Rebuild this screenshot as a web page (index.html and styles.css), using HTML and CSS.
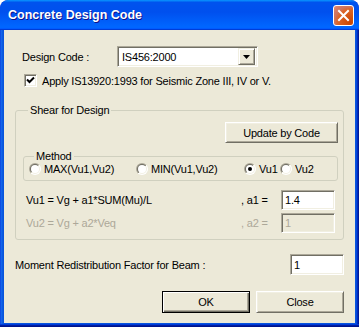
FILE: index.html
```html
<!DOCTYPE html>
<html>
<head>
<meta charset="utf-8">
<link rel="stylesheet" href="styles.css">
</head>
<body>
<div class="window">
  <div class="titlebar">
    <span class="title">Concrete Design Code</span>
    <span class="close-btn">
      <svg width="21" height="21" viewBox="0 0 21 21"><path d="M6 6 L15 15 M15 6 L6 15" stroke="#fff" stroke-width="2" stroke-linecap="square"/></svg>
    </span>
  </div>
  <div class="frame">
    <div class="client">
      <div class="code-row">
        <span class="code-label">Design Code :</span>
        <div class="combo sunken">
          <span class="combo-text">IS456:2000</span>
          <span class="drop raised">
            <svg width="7" height="4" viewBox="0 0 7 4"><path d="M0 0 H7 L3.5 4 Z" fill="#000"/></svg>
          </span>
        </div>
      </div>
      <div class="check-row">
        <span class="checkbox sunken">
          <svg width="9" height="9" viewBox="0 0 9 9"><path d="M1 3.5 L3.5 6 L8 1.5" stroke="#000" stroke-width="2" fill="none"/></svg>
        </span>
        <span>Apply IS13920:1993 for Seismic Zone III, IV or V.</span>
      </div>
      <fieldset class="group shear">
        <legend>Shear for Design</legend>
        <div class="update-row"><span class="btn update">Update by Code</span></div>
        <fieldset class="group method">
          <legend>Method</legend>
          <div class="radios">
            <span class="radio r-max"><svg class="rb"><use href="#radio"/></svg>MAX(Vu1,Vu2)</span>
            <span class="radio r-min"><svg class="rb"><use href="#radio"/></svg>MIN(Vu1,Vu2)</span>
            <span class="radio r-vu1"><svg class="rb"><use href="#radio"/><circle cx="6" cy="6" r="2" fill="#000"/></svg>Vu1</span>
            <span class="radio r-vu2"><svg class="rb"><use href="#radio"/></svg>Vu2</span>
          </div>
        </fieldset>
        <div class="formula-row">
          <span class="formula">Vu1 = Vg + a1*SUM(Mu)/L</span>
          <span class="coef">, a1 =</span>
          <span class="edit sunken">1.4</span>
        </div>
        <div class="formula-row disabled">
          <span class="formula">Vu2 = Vg + a2*Veq</span>
          <span class="coef">, a2 =</span>
          <span class="edit sunken">1</span>
        </div>
      </fieldset>
      <div class="moment-row">
        <span>Moment Redistribution Factor for Beam :</span>
        <span class="edit sunken moment-edit">1</span>
      </div>
      <div class="button-row">
        <span class="btn default">OK</span>
        <span class="btn">Close</span>
      </div>
    </div>
  </div>
</div>
<svg width="0" height="0" class="defs">
  <defs>
    <linearGradient id="g1" x1="0" y1="0" x2="1" y2="1">
      <stop offset="0.5" stop-color="#ACA899"/><stop offset="0.5" stop-color="#FFFFFF"/>
    </linearGradient>
    <linearGradient id="g2" x1="0" y1="0" x2="1" y2="1">
      <stop offset="0.5" stop-color="#716F64"/><stop offset="0.5" stop-color="#F1EFE2"/>
    </linearGradient>
    <g id="radio">
      <circle cx="6" cy="6" r="6" fill="url(#g1)"/>
      <circle cx="6" cy="6" r="5" fill="url(#g2)"/>
      <circle cx="6" cy="6" r="4" fill="#fff"/>
    </g>
  </defs>
</svg>
</body>
</html>
```

FILE: styles.css
```css
html, body {
  margin: 0;
  padding: 0;
  background: #ffffff;
}

.defs {
  position: absolute;
}

.window {
  width: 359px;
  height: 327px;
  display: flex;
  flex-direction: column;
  background: #0831d9;
  border-radius: 8px 8px 0 0;
  overflow: hidden;
  font-family: "Liberation Sans", Arial, sans-serif;
  font-size: 11px;
  letter-spacing: -0.2px;
  color: #000;
}

.titlebar {
  height: 30px;
  flex: none;
  display: flex;
  align-items: center;
  justify-content: space-between;
  padding: 0 5px 0 8px;
  box-sizing: border-box;
  background: linear-gradient(180deg, #0997ff, #0053ee 8%, #0050ee 40%, #0066ff 88%, #0066ff 93%, #005bff 95%, #003dd7 96%, #003dd7);
  border-radius: 8px 8px 0 0;
}

.title {
  color: #fff;
  font-family: "Liberation Sans", Arial, sans-serif;
  font-weight: bold;
  font-size: 12.5px;
  text-shadow: 1px 1px #0f1089;
  letter-spacing: 0;
}

.close-btn {
  width: 21px;
  height: 21px;
  box-sizing: border-box;
  border: 1px solid #fff;
  border-radius: 3px;
  background: radial-gradient(circle at 85% 85%, #cc4600 0%, #dc6527 55%, #cd7561 70%, #e5a01a00 100%), linear-gradient(135deg, #e99078, #c7411c);
  display: flex;
  align-items: center;
  justify-content: center;
  margin-top: 1px;
}

.close-btn svg {
  display: block;
  margin: -1px;
}

.frame {
  flex: 1;
  display: flex;
  padding: 0 4px 4px 4px;
  background: linear-gradient(90deg, #0831d9 0, #166aee 1px, #0855dd 3px, #0855dd calc(100% - 3px), #003bda calc(100% - 2px), #001ea0 calc(100% - 1px), #00138c 100%);
  box-shadow: inset 0 -1px #00138c, inset 0 -2px #001ea0, inset 0 -3px #003bda;
}

.client {
  flex: 1;
  background: #ece9d8;
  display: flex;
  flex-direction: column;
  padding: 0 0 0 11px;
}

.sunken {
  box-sizing: border-box;
  border: 1px solid;
  border-color: #aca899 #ffffff #ffffff #aca899;
  box-shadow: inset 1px 1px #716f64, inset -1px -1px #f1efe2;
  background: #fff;
}

.raised {
  box-sizing: border-box;
  border: 1px solid;
  border-color: #f1efe2 #716f64 #716f64 #f1efe2;
  box-shadow: inset 1px 1px #fff, inset -1px -1px #aca899;
  background: #ece9d8;
}

.code-row {
  display: flex;
  align-items: center;
  margin-top: 16px;
  height: 21px;
}

.code-label {
  margin-left: 7px;
  width: 95px;
}

.combo {
  width: 141px;
  height: 21px;
  display: flex;
  align-items: center;
  justify-content: space-between;
  padding: 2px;
}

.combo-text {
  padding-left: 2px;
}

.drop {
  width: 17px;
  height: 17px;
  display: flex;
  align-items: center;
  justify-content: center;
}

.drop svg {
  display: block;
  margin-top: 1px;
}

.check-row {
  display: flex;
  align-items: center;
  margin-top: 7px;
  margin-left: 9px;
  height: 13px;
}

.checkbox {
  width: 13px;
  height: 13px;
  display: flex;
  align-items: center;
  justify-content: center;
  margin-right: 5px;
}

.checkbox svg {
  display: block;
}

.group {
  margin: 0;
  padding: 0;
  border: 1px solid #d0d0bf;
  border-radius: 3px;
  min-width: 0;
}

.group legend {
  padding: 0 2px;
  margin-left: 5px;
  line-height: 13px;
}

.shear {
  margin-top: 17px;
  width: 329px;
  height: 136px;
  box-sizing: border-box;
  padding: 0 5px 0 7px;
}

.update-row {
  display: flex;
  justify-content: flex-end;
  margin-top: 5px;
}

.btn {
  box-sizing: border-box;
  display: flex;
  align-items: center;
  justify-content: center;
  height: 21px;
  border: 1px solid;
  border-color: #fff #716f64 #716f64 #fff;
  box-shadow: inset 1px 1px #f1efe2, inset -1px -1px #aca899;
  background: #ece9d8;
}

.update {
  width: 113px;
}

.method {
  margin-top: 7px;
  width: 315px;
  height: 31px;
  box-sizing: border-box;
  padding: 0 0 0 5px;
}

.radios {
  display: flex;
  align-items: center;
  height: 13px;
  margin-top: -1px;
}

.radio {
  display: flex;
  align-items: center;
  flex: none;
  white-space: nowrap;
}

.rb {
  width: 12px;
  height: 12px;
  margin-right: 3px;
  flex: none;
}

.r-max { width: 107px; }
.r-min { width: 108px; }
.r-vu1 { width: 36px; }

.formula-row {
  display: flex;
  align-items: center;
  height: 20px;
  margin-top: 9px;
}

.formula-row.disabled {
  margin-top: 3px;
  color: #aca899;
}

.formula {
  margin-left: 3px;
  width: 215px;
}

.coef {
  width: 40px;
}

.edit {
  width: 54px;
  height: 20px;
  display: flex;
  align-items: center;
  padding-left: 3px;
}

.disabled .edit {
  background: #ece9d8;
}

.moment-row {
  display: flex;
  align-items: center;
  justify-content: space-between;
  margin-top: 14px;
  width: 329px;
  height: 21px;
}

.moment-edit {
  height: 21px;
}

.button-row {
  display: flex;
  justify-content: flex-end;
  gap: 6px;
  width: 329px;
  margin-top: 16px;
}

.button-row .btn {
  width: 88px;
  height: 22px;
}

.btn.default {
  border: 1px solid #000;
  box-shadow: inset 1px 1px #fff, inset -1px -1px #716f64, inset -2px -2px #aca899;
}
```
